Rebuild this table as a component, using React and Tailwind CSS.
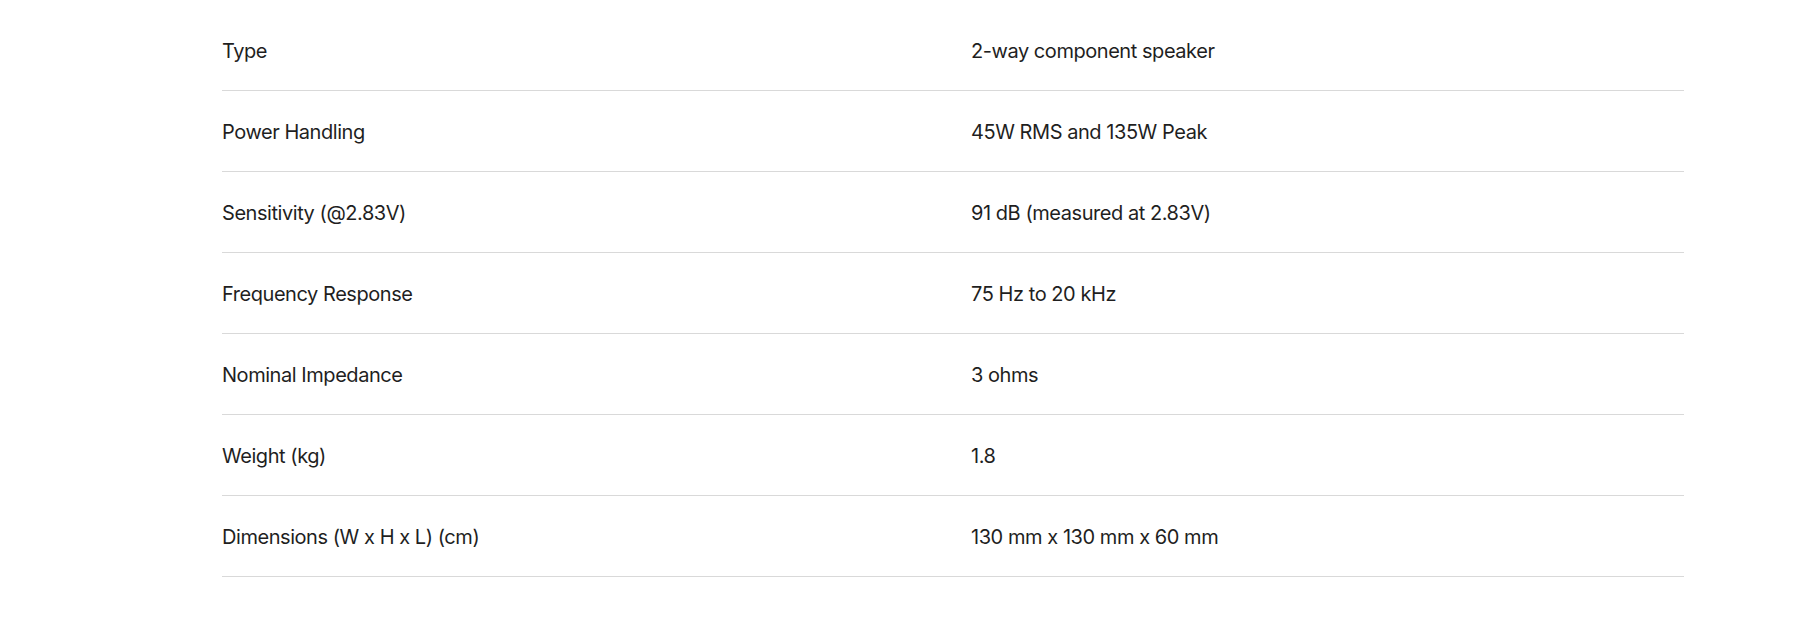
export default function App() {
  const rows = [
    ["Type", "2-way component speaker"],
    ["Power Handling", "45W RMS and 135W Peak"],
    ["Sensitivity (@2.83V)", "91 dB (measured at 2.83V)"],
    ["Frequency Response", "75 Hz to 20 kHz"],
    ["Nominal Impedance", "3 ohms"],
    ["Weight (kg)", "1.8"],
    ["Dimensions (W x H x L) (cm)", "130 mm x 130 mm x 60 mm"],
  ];
  return (
    <div className="w-[1800px] h-[640px] bg-white pt-[10px]" style={{ fontFamily: "Inter, 'Noto Sans', sans-serif" }}>
      <div className="ml-[222px] w-[1462px]">
        {rows.map(([k, v]) => (
          <div key={k} className="grid grid-cols-[749px_1fr] h-[81px] items-center pt-[2px] border-b border-[#d9d9d9] text-[20px] tracking-[-0.45px] text-[#1f1f1f]">
            <div>{k}</div>
            <div>{v}</div>
          </div>
        ))}
      </div>
    </div>
  );
}
